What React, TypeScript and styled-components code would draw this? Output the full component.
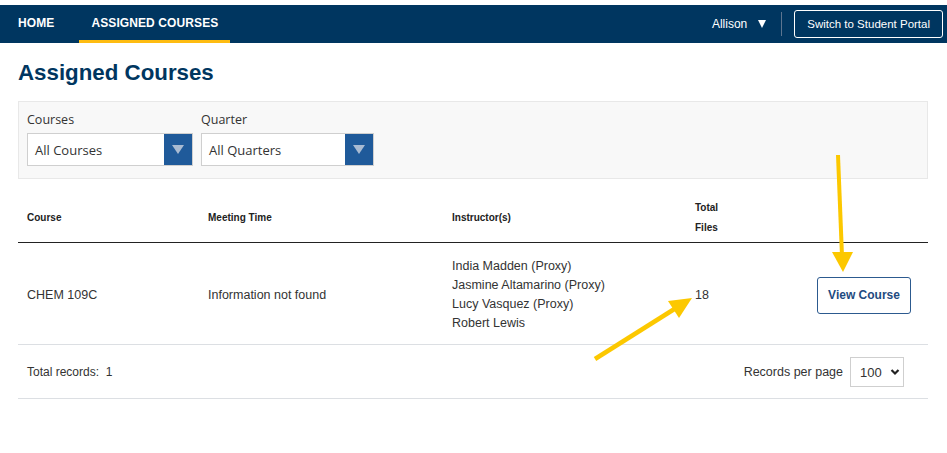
import React from "react";
import styled, { createGlobalStyle } from "styled-components";

const GlobalStyle = createGlobalStyle`
    html, body {
        margin: 0;
        padding: 0;
        background: #fff;
    }
    body {
        font-family: "Liberation Sans", Arial, sans-serif;
        color: #333;
    }
`;

const Page = styled.div`
    position: relative;
    width: 947px;
    min-height: 453px;
    padding-top: 5px;
    box-sizing: border-box;
`;

const NavBar = styled.nav`
    height: 38px;
    background: #003660;
    display: flex;
    align-items: stretch;
    justify-content: space-between;
    padding-left: 6px;
`;

const NavTabs = styled.div`
    display: flex;
    gap: 13px;
`;

const NavTab = styled.a<{ $active?: boolean }>`
    display: flex;
    align-items: center;
    padding: 0 12px;
    color: #fff;
    font-size: 12px;
    font-weight: 700;
    letter-spacing: 0.1px;
    text-transform: uppercase;
    box-sizing: border-box;
    border-bottom: 3px solid ${(p) => (p.$active ? "#febc11" : "transparent")};
    padding-top: 1px;
`;

const NavRight = styled.div`
    display: flex;
    align-items: center;
    padding-right: 4px;
`;

const UserMenu = styled.div`
    display: flex;
    align-items: center;
    gap: 11px;
    color: #fff;
    font-size: 12px;
    padding-right: 15px;
    border-right: 1px solid #5d7590;
    height: 24px;
    margin-right: 12px;
`;

const Caret = styled.span`
    width: 0;
    height: 0;
    border-left: 4px solid transparent;
    border-right: 4px solid transparent;
    border-top: 8px solid #fff;
`;

const PortalButton = styled.button`
    height: 28px;
    padding: 0 12px;
    background: transparent;
    border: 1px solid #fff;
    border-radius: 3px;
    color: #fff;
    font-family: "Liberation Sans", Arial, sans-serif;
    font-size: 11.5px;
`;

const Content = styled.main`
    padding: 0 19px 0 18px;
`;

const Title = styled.h1`
    margin: 17px 0 15px;
    font-size: 22.3px;
    line-height: 26px;
    font-weight: 700;
    color: #003660;
`;

const FilterPanel = styled.div`
    display: flex;
    gap: 8px;
    background: #f8f8f8;
    border: 1px solid #e8e8e8;
    padding: 9px 8px 12px;
`;

const FilterField = styled.label`
    display: flex;
    flex-direction: column;
    gap: 4px;
    font-family: "Open Sans", sans-serif;
    font-size: 12.5px;
    color: #333;
    line-height: 18px;
`;

const SelectBox = styled.div<{ $width: number }>`
    display: flex;
    width: ${(p) => p.$width}px;
    height: 33px;
    box-sizing: border-box;
    border: 1px solid #cfcfcf;
    background: #fff;
`;

const SelectValue = styled.span`
    flex: 1;
    display: flex;
    align-items: center;
    padding-left: 7px;
    font-size: 13px;
    color: #333;
`;

const SelectArrow = styled.span`
    width: 28px;
    background: #1f5a9a;
    display: flex;
    align-items: center;
    justify-content: center;

    &::after {
        content: "";
        border-left: 6px solid transparent;
        border-right: 6px solid transparent;
        border-top: 9px solid #a9bbd2;
    }
`;

const Table = styled.div`
    margin-top: 7px;
`;

const Row = styled.div<{ $head?: boolean }>`
    display: grid;
    grid-template-columns: 181px 244px 243px 1fr auto;
    align-items: center;
    border-bottom: 1px solid ${(p) => (p.$head ? "#222" : "#dcdfe3")};
    padding: ${(p) => (p.$head ? "12px 0 4px" : "14px 0 11px")};
`;

const HeadCell = styled.div`
    padding-left: 9px;
    font-size: 10px;
    font-weight: 700;
    color: #222;
    line-height: 20px;
`;

const Cell = styled.div`
    padding-left: 9px;
    font-size: 12.5px;
    color: #333;
    line-height: 19px;
`;

const ButtonCell = styled.div`
    padding-right: 17px;
`;

const ViewButton = styled.button`
    width: 94px;
    height: 37px;
    background: #fff;
    border: 1px solid #2c5a8f;
    border-radius: 3px;
    color: #1e4b80;
    font-family: "Liberation Sans", Arial, sans-serif;
    font-size: 12px;
    font-weight: 700;
`;

const Footer = styled.div`
    display: flex;
    align-items: center;
    justify-content: space-between;
    padding: 12px 24px 11px 9px;
    border-bottom: 1px solid #dcdfe3;
    font-size: 12px;
    color: #333;
`;

const PerPage = styled.div`
    display: flex;
    align-items: center;
    gap: 7px;
    font-size: 12.5px;
`;

const PageSelect = styled.div`
    display: flex;
    align-items: center;
    gap: 8px;
    width: 54px;
    height: 30px;
    box-sizing: border-box;
    border: 1px solid #cfcfcf;
    padding-left: 9px;
    font-size: 13px;
`;

const Overlay = styled.svg`
    position: absolute;
    top: 0;
    left: 0;
    pointer-events: none;
`;

const instructors = [
    "India Madden (Proxy)",
    "Jasmine Altamarino (Proxy)",
    "Lucy Vasquez (Proxy)",
    "Robert Lewis",
];

const App: React.FunctionComponent = () => {
    return (
        <Page>
            <GlobalStyle />
            <NavBar>
                <NavTabs>
                    <NavTab>Home</NavTab>
                    <NavTab $active>Assigned Courses</NavTab>
                </NavTabs>
                <NavRight>
                    <UserMenu>
                        Allison <Caret />
                    </UserMenu>
                    <PortalButton>Switch to Student Portal</PortalButton>
                </NavRight>
            </NavBar>

            <Content>
                <Title>Assigned Courses</Title>

                <FilterPanel>
                    <FilterField>
                        Courses
                        <SelectBox $width={166}>
                            <SelectValue>All Courses</SelectValue>
                            <SelectArrow />
                        </SelectBox>
                    </FilterField>
                    <FilterField>
                        Quarter
                        <SelectBox $width={173}>
                            <SelectValue>All Quarters</SelectValue>
                            <SelectArrow />
                        </SelectBox>
                    </FilterField>
                </FilterPanel>

                <Table>
                    <Row $head>
                        <HeadCell>Course</HeadCell>
                        <HeadCell>Meeting Time</HeadCell>
                        <HeadCell>Instructor(s)</HeadCell>
                        <HeadCell>
                            Total
                            <br />
                            Files
                        </HeadCell>
                        <div />
                    </Row>
                    <Row>
                        <Cell>CHEM 109C</Cell>
                        <Cell>Information not found</Cell>
                        <Cell>
                            {instructors.map((name) => (
                                <div key={name}>{name}</div>
                            ))}
                        </Cell>
                        <Cell>18</Cell>
                        <ButtonCell>
                            <ViewButton>View Course</ViewButton>
                        </ButtonCell>
                    </Row>
                    <Footer>
                        <span>Total records:&nbsp; 1</span>
                        <PerPage>
                            Records per page
                            <PageSelect>
                                100
                                <svg width="10" height="8" viewBox="0 0 10 8">
                                    <path d="M1.5 2 L5 5.5 L8.5 2" fill="none" stroke="#222" strokeWidth="2.2" />
                                </svg>
                            </PageSelect>
                        </PerPage>
                    </Footer>
                </Table>
            </Content>

            <Overlay width="947" height="453" viewBox="0 0 947 453">
                <line x1="838" y1="155" x2="842" y2="256" stroke="#fcc800" strokeWidth="4" />
                <polygon points="832,252 853,252 843,272" fill="#fcc800" />
                <line x1="595" y1="359" x2="676" y2="308" stroke="#fcc800" strokeWidth="4.5" />
                <polygon points="692,298 668,301 679,318" fill="#fcc800" />
            </Overlay>
        </Page>
    );
};

export default App;
